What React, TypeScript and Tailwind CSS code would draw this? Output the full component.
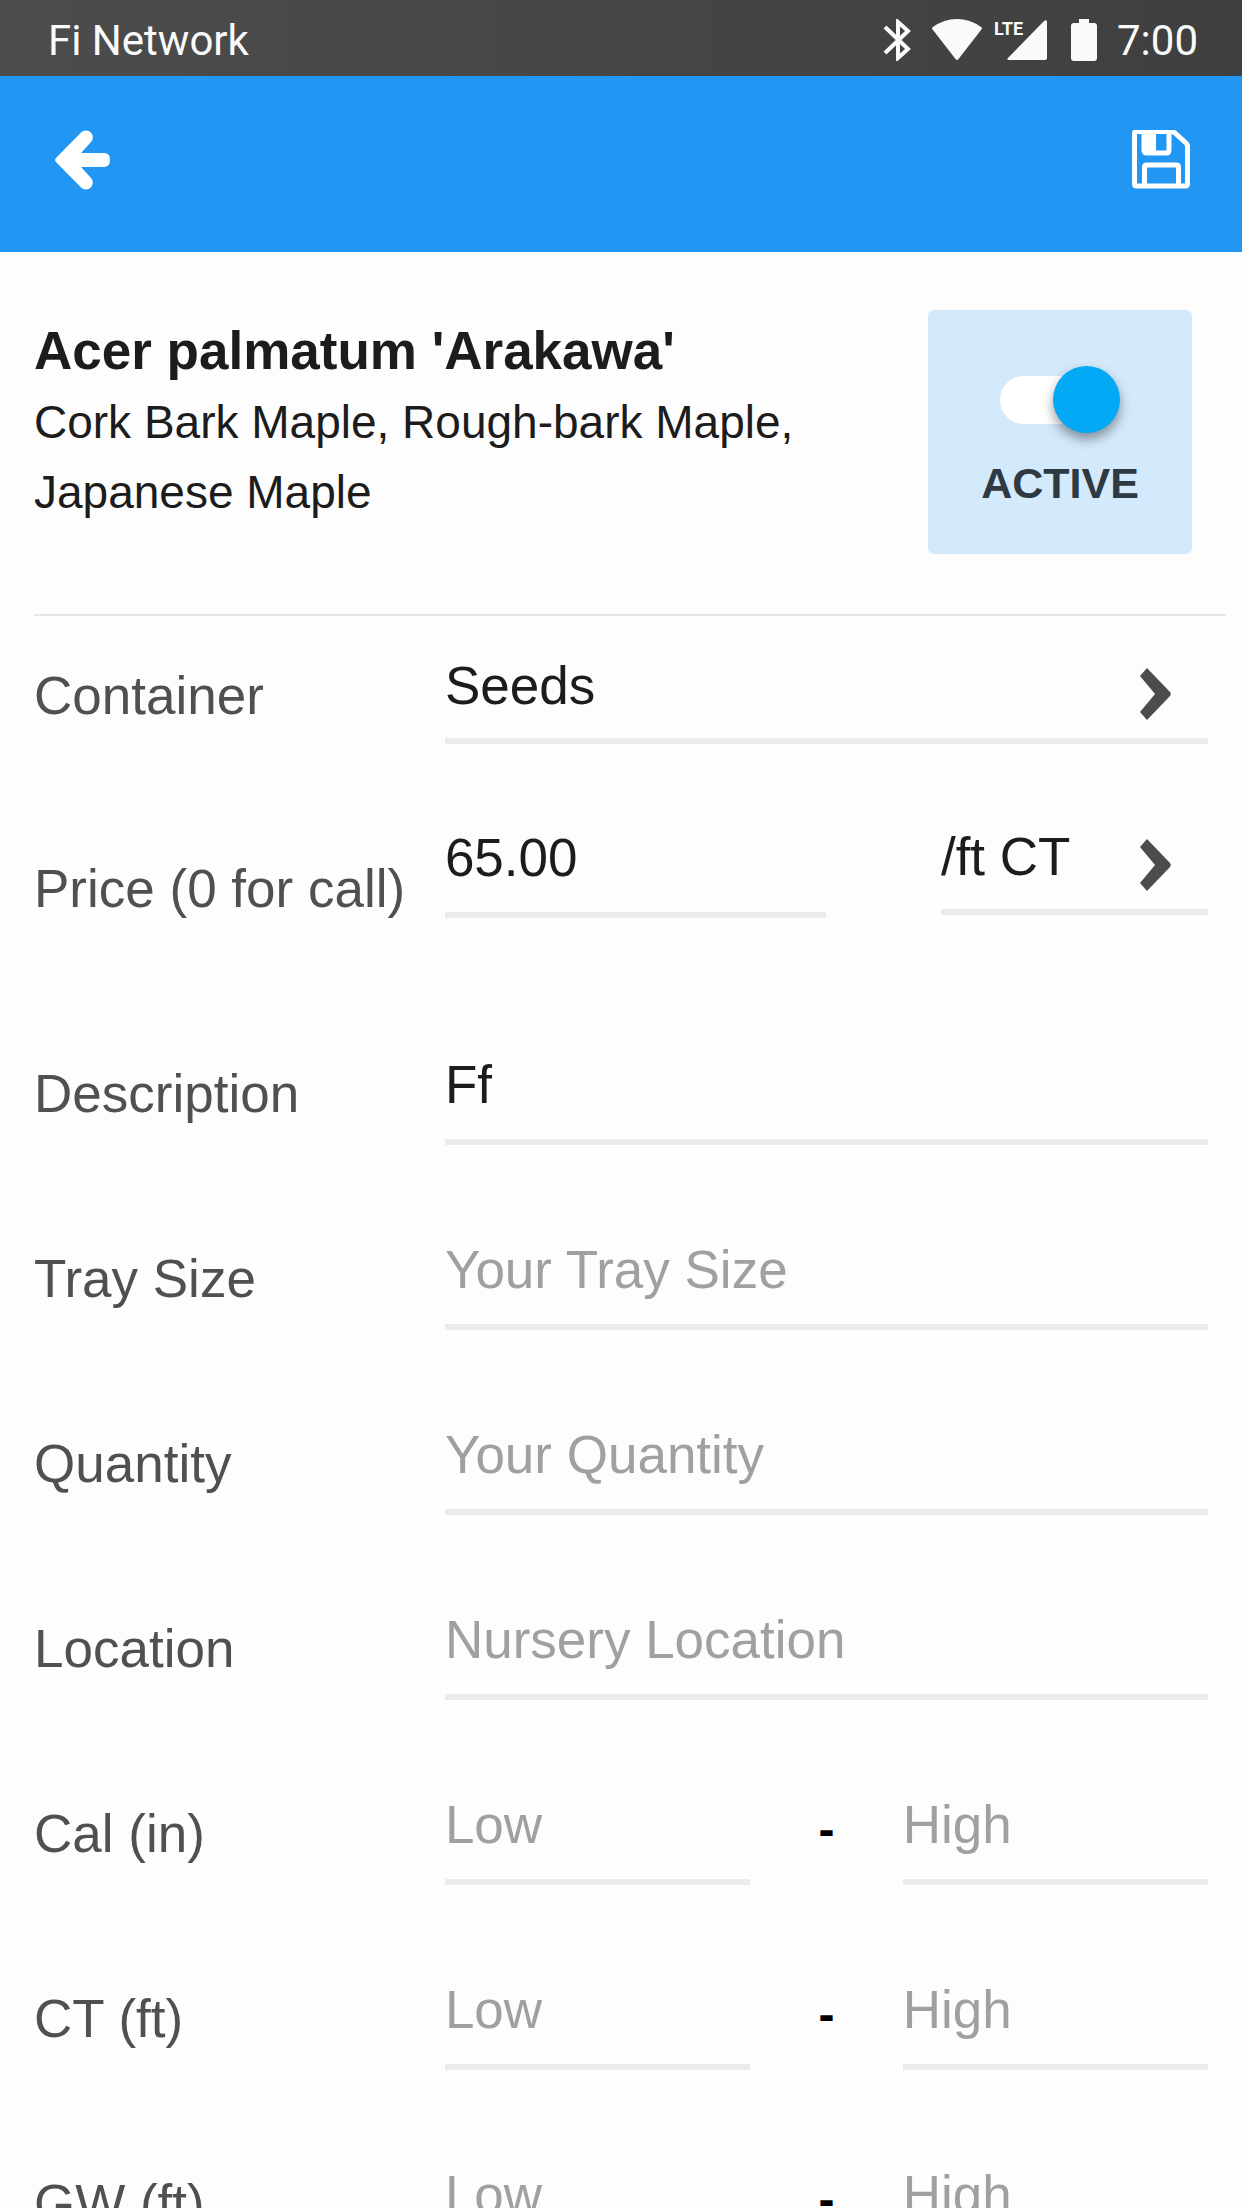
import React from "react";

const fieldClass =
  "block w-full min-w-0 h-[91px] pb-[25px] border-b-6 border-[#ebebeb] bg-transparent text-[53px] leading-[60px] text-[#1c1c1c] placeholder:text-[#a0a0a0] placeholder:opacity-100 outline-none";
const labelClass =
  "pt-[10px] text-[53px] leading-[60px] text-[#505050] whitespace-nowrap";
const rowClass = "grid grid-cols-[35fr_65fr] items-start";

const textFields = [
  { id: "description", label: "Description", placeholder: "", value: "Ff" },
  { id: "tray", label: "Tray Size", placeholder: "Your Tray Size", value: "" },
  { id: "quantity", label: "Quantity", placeholder: "Your Quantity", value: "" },
  { id: "location", label: "Location", placeholder: "Nursery Location", value: "" },
];

const rangeFields = [
  { id: "cal", label: "Cal (in)" },
  { id: "ct", label: "CT (ft)" },
  { id: "gw", label: "GW (ft)" },
];

const StatusBar = () => {
  return (
    <div className="flex items-center justify-between shrink-0 h-[76px] pt-1 pl-12 pr-11 bg-linear-to-r from-[#4c4c4c] to-[#3f3f3f] text-[#fafafa] font-['Roboto',sans-serif] text-[42px] leading-[48px]">
      <span className="pt-0.5">Fi Network</span>
      <div className="flex items-center">
        <svg className="w-7 h-[42px]" viewBox="0 0 28 42" fill="none" stroke="currentColor" strokeWidth="4">
          <path d="M2 8l23 22-10 9V3l10 9L2 34" />
        </svg>
        <svg className="w-[50px] h-[42px] ml-[21px]" viewBox="0 0 50 42" fill="currentColor">
          <path d="M1 11Q-1 9 1 8Q12 0 25 0T49 8Q51 9 49 11L26.500 40Q25 42 23.500 40Z" />
        </svg>
        <div className="relative w-[53px] h-[42px] ml-3">
          <span className="absolute left-0 top-0 font-bold text-lg leading-5">LTE</span>
          <svg className="w-full h-full" viewBox="0 0 53 42" fill="currentColor">
            <path d="M50 2q3-2 3 1v36q0 2-2 2H15q-3 0-1-2z" />
          </svg>
        </div>
        <svg className="w-[26px] h-[42px] ml-6" viewBox="0 0 26 42" fill="currentColor">
          <path d="M8 0h10v4h5q3 0 3 3v32q0 3-3 3H3q-3 0-3-3V7q0-3 3-3h5z" />
        </svg>
        <span className="ml-5 pt-0.5">7:00</span>
      </div>
    </div>
  );
};

const Toolbar = () => {
  return (
    <header className="flex items-center justify-between shrink-0 h-[176px] pb-2 pl-[54px] pr-[52px] bg-[#2196f3] text-white">
      <button type="button" aria-label="Back">
        <svg className="w-14 h-[60px]" viewBox="0 0 56 60" fill="currentColor">
          <path d="M2 28L27 2.500a6.800 6.800 0 0 1 9.800 9.800L27 23h23q6 0 6 7t-6 7H27l9.800 10.700a6.800 6.800 0 0 1-9.800 9.800L2 32q-2-2 0-4z" />
        </svg>
      </button>
      <button type="button" aria-label="Save">
        <svg className="w-[58px] h-[60px]" viewBox="0 0 58 60" fill="none" stroke="currentColor" strokeWidth="5" strokeLinejoin="round">
          <path d="M2.500 3.500q0-2 2-2H39q2 0 4 1.500l11 10q1.500 1.500 1.500 3.500v37q0 2.500-2 2.500h-49q-2 0-2-2z" />
          <path d="M12 2v18q0 3 3 3h19q3 0 3-3V2" />
          <path d="M12 3h12v19H13z" fill="currentColor" stroke="none" />
          <path d="M12.500 56V37q0-2 2-2h30q2 0 2 2v19" />
        </svg>
      </button>
    </header>
  );
};

const ActiveToggle = () => {
  return (
    <label className="flex flex-col items-center shrink-0 w-[264px] h-[244px] pt-14 gap-5 rounded-md bg-[#d3e9fc]">
      <input type="checkbox" role="switch" defaultChecked className="sr-only peer" />
      <span className="relative flex items-center w-[120px] h-[67px] peer-checked:[&>i]:ml-auto">
        <span className="absolute left-0 w-[108px] h-12 rounded-full bg-white" />
        <i className="relative size-[67px] rounded-full bg-[#03a9f4] shadow-[0_6px_12px_rgba(0,0,0,0.4)]" />
      </span>
      <span className="text-[43px] leading-[60px] font-bold text-[#2e3942]">ACTIVE</span>
    </label>
  );
};

const SelectField = ({ id, label, value }: { id: string; label?: string; value: string }) => {
  return (
    <div className="grid border-b-6 border-[#ebebeb]">
      <select
        id={id}
        aria-label={label}
        defaultValue={value}
        className="col-start-1 row-start-1 appearance-none w-full h-[82px] pb-[22px] bg-transparent text-[53px] leading-[60px] text-[#1c1c1c] outline-none"
      >
        <option>{value}</option>
      </select>
      <svg
        className="col-start-1 row-start-1 justify-self-end w-[31px] h-[52px] mt-3 mr-[37px] pointer-events-none"
        viewBox="0 0 31 52"
        fill="#4c4c4c"
      >
        <path d="M7 0L30 24q1.500 2 0 4L7 52l-7-8 15-18L0 8z" />
      </svg>
    </div>
  );
};

const App = () => {
  return (
    <div className="flex flex-col h-screen overflow-hidden bg-[#fdfdfd] font-['Liberation_Sans',Arial,sans-serif]">
      <StatusBar />
      <Toolbar />
      <main className="flex-1 min-h-0 overflow-y-auto [scrollbar-width:none]">
        <section className="flex items-start justify-between gap-8 ml-[34px] mr-4 pr-[34px] pt-[58px] pb-[60px] border-b-2 border-[#e6e6e6]">
          <div className="pt-[5px] text-[#1c1c1c]">
            <h1 className="text-[53px] leading-[72px] font-bold">Acer palmatum 'Arakawa'</h1>
            <p className="text-[46px] leading-[70px]">
              Cork Bark Maple, Rough-bark Maple, Japanese Maple
            </p>
          </div>
          <ActiveToggle />
        </section>
        <form className="pt-10 px-[34px]">
          <div className={rowClass}>
            <label htmlFor="container" className={labelClass}>
              Container
            </label>
            <SelectField id="container" value="Seeds" />
          </div>
          <div className={`${rowClass} mt-[83px]`}>
            <label htmlFor="price" className="pt-8 text-[53px] leading-[60px] text-[#505050] whitespace-nowrap">
              Price (0 for call)
            </label>
            <div className="grid grid-cols-[50fr_35fr] gap-x-[15%] items-start">
              <input id="price" type="text" defaultValue="65.00" className={fieldClass} />
              <SelectField id="unit" label="Price unit" value="/ft CT" />
            </div>
          </div>
          <div className="flex flex-col gap-[94px] pt-[135px] pb-[94px]">
            {textFields.map((field) => (
              <div key={field.id} className={rowClass}>
                <label htmlFor={field.id} className={labelClass}>
                  {field.label}
                </label>
                <input
                  id={field.id}
                  type="text"
                  defaultValue={field.value}
                  placeholder={field.placeholder}
                  className={fieldClass}
                />
              </div>
            ))}
            {rangeFields.map((field) => (
              <div key={field.id} className={rowClass}>
                <label htmlFor={field.id} className={labelClass}>
                  {field.label}
                </label>
                <div className="grid grid-cols-[2fr_1fr_2fr] items-start">
                  <input id={field.id} type="text" placeholder="Low" className={fieldClass} />
                  <span className="text-center text-5xl leading-[72px] font-bold text-black">-</span>
                  <input
                    type="text"
                    aria-label={`${field.label} high`}
                    placeholder="High"
                    className={fieldClass}
                  />
                </div>
              </div>
            ))}
          </div>
        </form>
      </main>
    </div>
  );
};

export default App;
